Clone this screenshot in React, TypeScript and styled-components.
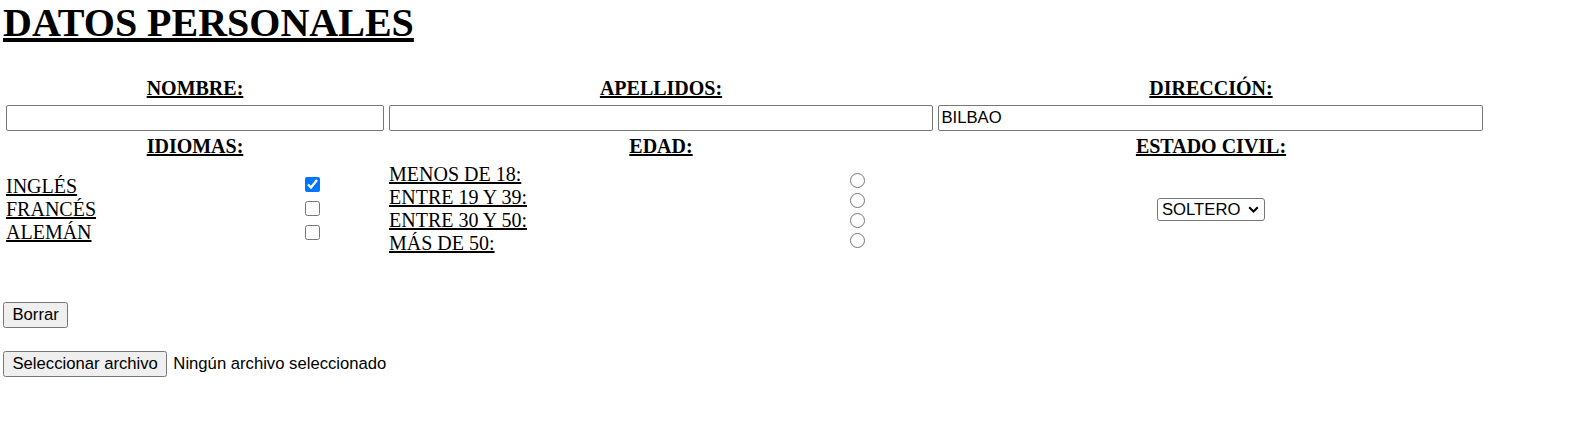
import React from "react";
import styled, { createGlobalStyle } from "styled-components";

const GlobalStyle = createGlobalStyle`
  body {
    margin: 0;
    background: #ffffff;
    color: #000000;
    font-family: "Liberation Serif", "Times New Roman", serif;
  }
`;

const controlFont = `"Liberation Sans", Arial, sans-serif`;

const idiomas = [
  { label: "INGLÉS", checked: true },
  { label: "FRANCÉS", checked: false },
  { label: "ALEMÁN", checked: false },
];

const edades = ["MENOS DE 18:", "ENTRE 19 Y 39:", "ENTRE 30 Y 50:", "MÁS DE 50:"];

export default function App() {
  return (
    <>
      <GlobalStyle />
      <Page>
        <Title>DATOS PERSONALES</Title>
        <FormGrid>
          <Cell>
            <Heading>NOMBRE:</Heading>
          </Cell>
          <Cell>
            <Heading>APELLIDOS:</Heading>
          </Cell>
          <Cell>
            <Heading>DIRECCIÓN:</Heading>
          </Cell>

          <InputRow>
            <TextInput $width={378} type="text" />
            <TextInput $width={544} type="text" />
            <TextInput $width={545} type="text" defaultValue="BILBAO" />
          </InputRow>

          <Cell>
            <Heading>IDIOMAS:</Heading>
          </Cell>
          <Cell>
            <Heading>EDAD:</Heading>
          </Cell>
          <Cell>
            <Heading>ESTADO CIVIL:</Heading>
          </Cell>

          <OptionCell>
            <LabelStack $width={299}>
              {idiomas.map((i) => (
                <OptionLabel key={i.label}>{i.label}</OptionLabel>
              ))}
            </LabelStack>
            <ControlStack>
              {idiomas.map((i) => (
                <ControlRow key={i.label} $height={24}>
                  <Check type="checkbox" defaultChecked={i.checked} />
                </ControlRow>
              ))}
            </ControlStack>
          </OptionCell>

          <OptionCell>
            <LabelStack $width={461} $indent={1}>
              {edades.map((e) => (
                <OptionLabel key={e}>{e}</OptionLabel>
              ))}
            </LabelStack>
            <ControlStack $shift={4}>
              {edades.map((e) => (
                <ControlRow key={e} $height={20}>
                  <Radio type="radio" name="edad" />
                </ControlRow>
              ))}
            </ControlStack>
          </OptionCell>

          <OptionCell $center>
            <SelectWrap>
              <Select defaultValue="soltero">
                <option value="soltero">SOLTERO</option>
                <option value="casado">CASADO</option>
              </Select>
              <Chevron width="11" height="7" viewBox="0 0 11 7">
                <path d="M1.2 1.2 L5.5 5.5 L9.8 1.2" fill="none" stroke="#000" strokeWidth="2" />
              </Chevron>
            </SelectWrap>
          </OptionCell>
        </FormGrid>

        <ButtonRow $top={44.6}>
          <Button type="button">Borrar</Button>
        </ButtonRow>

        <ButtonRow $top={23.5}>
          <Button type="button">Seleccionar archivo</Button>
          <FileName>Ningún archivo seleccionado</FileName>
        </ButtonRow>
      </Page>
    </>
  );
}

const Page = styled.div`
  padding-left: 3px;
`;

const Title = styled.h1`
  margin: 0 0 28.4px;
  font-size: 40px;
  line-height: 46px;
  font-weight: bold;
  text-decoration: underline;
`;

const FormGrid = styled.div`
  display: grid;
  grid-template-columns: 380px 548px 548px;
  gap: 2px;
  padding: 2px;
  width: max-content;
`;

const Cell = styled.div`
  padding: 1px;
  display: flex;
  justify-content: center;
  align-items: center;
`;

const Heading = styled.span`
  font-size: 20px;
  line-height: 23px;
  font-weight: bold;
  text-decoration: underline;
`;

const InputRow = styled.div`
  grid-column: 1 / -1;
  display: flex;
  gap: 5px;
  align-items: flex-start;
  height: 27px;
  padding: 1px;
`;

const TextInput = styled.input<{ $width: number }>`
  flex: none;
  box-sizing: border-box;
  width: ${(p) => p.$width}px;
  height: 26px;
  margin: 0.6px 0 0;
  padding: 0 2.5px;
  border: 1px solid #767676;
  border-radius: 2px;
  background: #ffffff;
  font-family: ${controlFont};
  font-size: 16.67px;
  color: #000000;
`;

const OptionCell = styled.div<{ $center?: boolean }>`
  padding: 1px;
  height: 92px;
  display: flex;
  align-items: center;
  justify-content: ${(p) => (p.$center ? "center" : "flex-start")};
`;

const LabelStack = styled.div<{ $width: number; $indent?: number }>`
  width: ${(p) => p.$width}px;
  padding-top: 2px;
  padding-left: ${(p) => p.$indent ?? 0}px;
  display: flex;
  flex-direction: column;
`;

const OptionLabel = styled.span`
  font-size: 20px;
  line-height: 23px;
  text-decoration: underline;
`;

const ControlStack = styled.div<{ $shift?: number }>`
  padding-top: ${(p) => p.$shift ?? 0}px;
  display: flex;
  flex-direction: column;
`;

const ControlRow = styled.div<{ $height: number }>`
  height: ${(p) => p.$height}px;
  display: flex;
  align-items: center;
`;

const Check = styled.input`
  width: 15px;
  height: 15px;
  margin: 0;
`;

const Radio = styled.input`
  width: 15px;
  height: 15px;
  margin: 0;
`;

const SelectWrap = styled.div`
  position: relative;
  display: inline-block;
  margin-top: 2px;
`;

const Select = styled.select`
  appearance: none;
  box-sizing: border-box;
  width: 108px;
  height: 23px;
  margin: 0;
  padding: 0 0 0 4px;
  border: 1px solid #767676;
  border-radius: 3px;
  background: #ffffff;
  font-family: ${controlFont};
  font-size: 16.67px;
  color: #000000;
`;

const Chevron = styled.svg`
  position: absolute;
  right: 6px;
  top: 8px;
  pointer-events: none;
`;

const ButtonRow = styled.div<{ $top: number }>`
  margin-top: ${(p) => p.$top}px;
  display: flex;
  align-items: center;
  gap: 6px;
`;

const Button = styled.button`
  box-sizing: border-box;
  height: 26px;
  margin: 0;
  padding: 0 8.5px;
  border: 1px solid #767676;
  border-radius: 2.5px;
  background: #efefef;
  font-family: ${controlFont};
  font-size: 16.67px;
  color: #000000;
`;

const FileName = styled.span`
  font-family: ${controlFont};
  font-size: 16.67px;
  color: #000000;
`;
